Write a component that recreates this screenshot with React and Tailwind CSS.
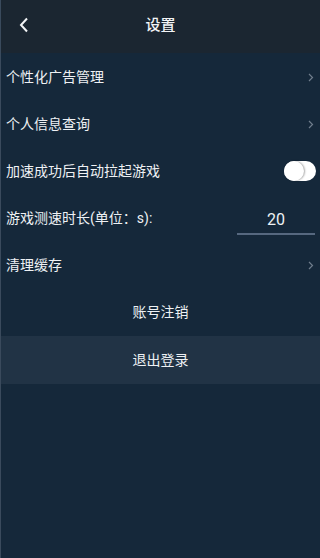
import { useState } from 'react';

const font = { fontFamily: 'Roboto, "Noto Sans CJK SC", sans-serif' };

const Chevron = () => (
  <svg width="6" height="9" viewBox="0 0 6 9" className="mr-[4px]">
    <path d="M1 1l3.5 3.5L1 8" fill="none" stroke="#6f7d8c" strokeWidth="1.2" />
  </svg>
);

const Row = ({ label, children }) => (
  <div className="h-[47px] pt-[2px] flex items-center justify-between pl-[5px] pr-[2px]">
    <span className="text-[14px] text-[#eef1f4]">{label}</span>
    {children}
  </div>
);

const Settings = () => {
  const [autoLaunch, setAutoLaunch] = useState(false);
  const [duration, setDuration] = useState('20');

  return (
    <div className="min-h-[558px] bg-[#15283a] border-l border-[#3a4a5c]" style={font}>
      <div className="h-[53px] bg-[#1b2631] flex items-center relative pb-[3px]">
        <button className="absolute left-[18px] top-[17px]">
          <svg width="10" height="16" viewBox="0 0 10 16">
            <path d="M8 1.5L2 8l6 6.5" fill="none" stroke="#f2f4f6" strokeWidth="2" />
          </svg>
        </button>
        <h1 className="flex-1 text-center text-[15px] font-medium text-[#f2f4f6]">设置</h1>
      </div>

      <Row label="个性化广告管理">
        <Chevron />
      </Row>
      <Row label="个人信息查询">
        <Chevron />
      </Row>
      <Row label="加速成功后自动拉起游戏">
        <button
          onClick={() => setAutoLaunch(!autoLaunch)}
          className="w-[32px] h-[20px] rounded-full bg-white relative mr-[2px] -mt-[2px]"
        >
          <span
            className={`absolute top-0 w-[20px] h-[20px] rounded-full bg-white shadow-[1px_0_2px_rgba(0,0,0,0.35)] ${
              autoLaunch ? 'right-0' : 'left-0'
            }`}
          />
        </button>
      </Row>
      <Row label="游戏测速时长(单位：s):">
        <div className="w-[78px] mr-[3px] border-b-2 border-[#56687f] mt-[6px]">
          <input
            value={duration}
            onChange={(e) => setDuration(e.target.value)}
            className="w-full bg-transparent text-center text-[16px] text-[#eef1f4] outline-none pb-[1px]"
            style={font}
          />
        </div>
      </Row>
      <Row label="清理缓存">
        <Chevron />
      </Row>
      <div className="h-[48px] flex items-center justify-center text-[14px] text-[#eef1f4]">
        账号注销
      </div>
      <button className="w-full h-[48px] bg-[#213345] flex items-center justify-center text-[14px] text-[#eef1f4]">
        退出登录
      </button>
    </div>
  );
};

export default Settings;
